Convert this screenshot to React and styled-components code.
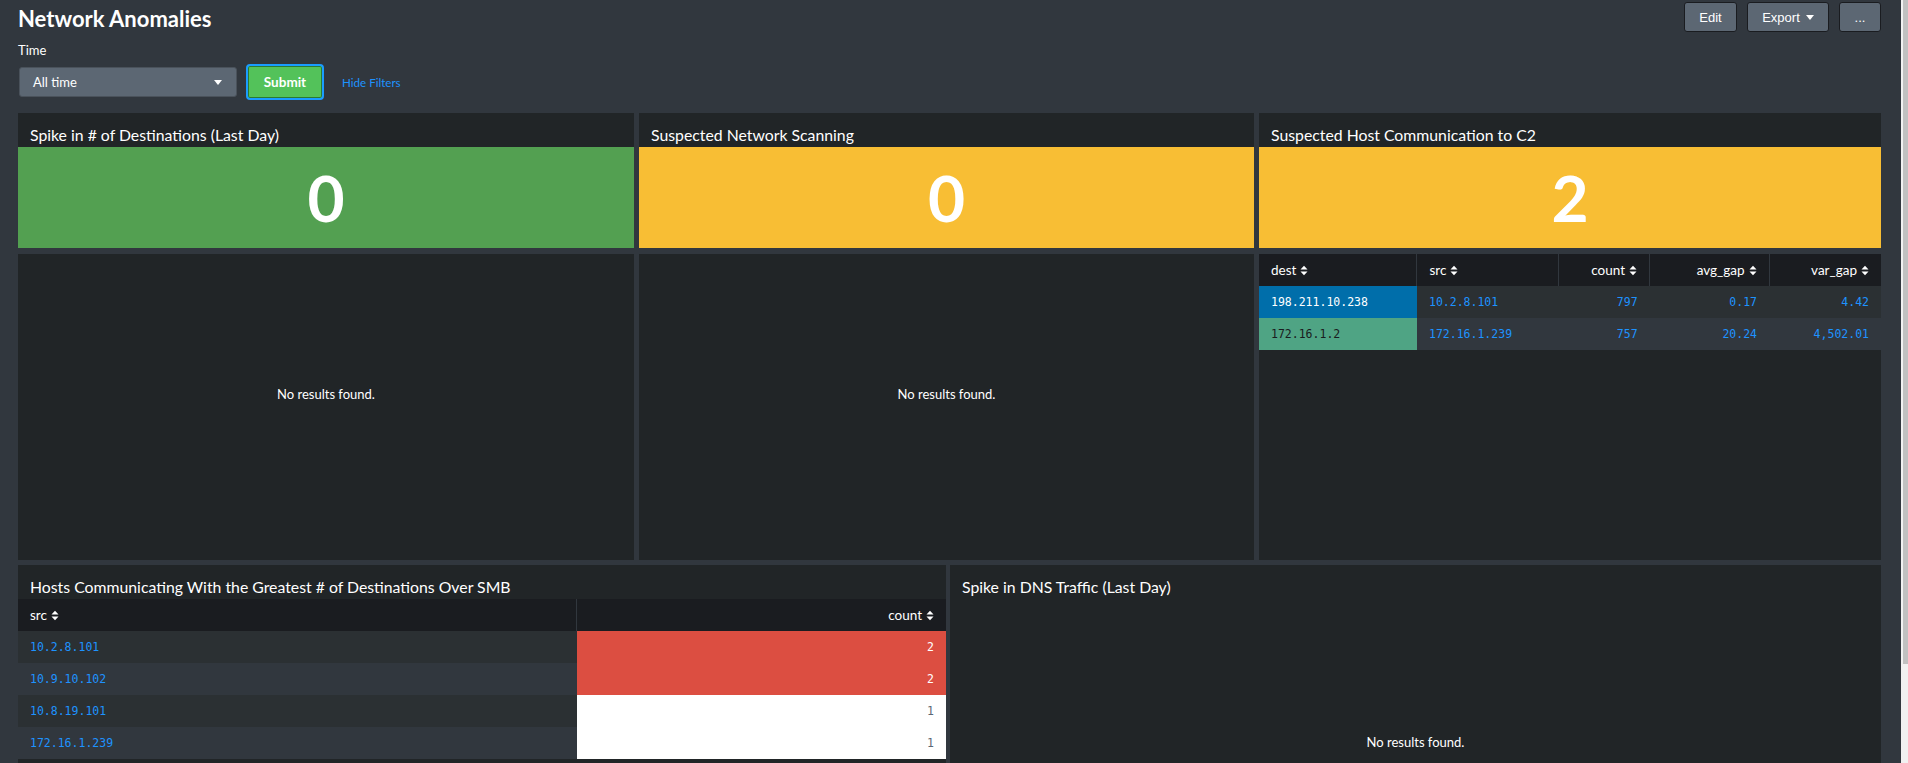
import React from "react";
import styled, { createGlobalStyle } from "styled-components";

const GlobalStyle = createGlobalStyle`
  html, body {
    margin: 0;
    padding: 0;
    background: #31373e;
    overflow: hidden;
  }
  body {
    font-family: Lato, "Open Sans", sans-serif;
    color: #fff;
  }
  * { box-sizing: border-box; }
`;

const Shell = styled.div`
  display: flex;
  height: 763px;
  overflow: hidden;
`;

const Main = styled.div`
  flex: 1;
  min-width: 0;
  padding: 0 20px 0 18px;
  overflow: hidden;
`;

const ScrollTrack = styled.div`
  width: 7px;
  flex: none;
  background: #f1f1f1;
  display: flex;
  justify-content: flex-end;
`;

const ScrollThumb = styled.div`
  width: 5px;
  height: 664px;
  background: #c1c1c1;
`;

const Header = styled.div`
  display: flex;
  justify-content: space-between;
  align-items: flex-start;
`;

const PageTitle = styled.h1`
  margin: 6px 0 0 0;
  font-size: 22px;
  line-height: 1.2;
  font-weight: 700;
  color: #fff;
`;

const Actions = styled.div`
  display: flex;
  gap: 10px;
  margin-top: 2px;
`;

const ActionButton = styled.button`
  height: 30px;
  width: ${(p) => p.$w}px;
  background: #5c6773;
  border: 1px solid #1a1c20;
  border-radius: 3px;
  color: #fff;
  font-family: "Liberation Sans", Arial, sans-serif;
  font-size: 13px;
  display: flex;
  align-items: center;
  justify-content: center;
  gap: 6px;
  padding: 0;
`;

const Caret = styled.span`
  width: 0;
  height: 0;
  border-left: 4px solid transparent;
  border-right: 4px solid transparent;
  border-top: 5px solid #fff;
`;

const FieldLabel = styled.div`
  margin-top: 11px;
  font-size: 13px;
  line-height: 15px;
  color: #fff;
`;

const Filters = styled.div`
  display: flex;
  align-items: center;
  height: 36px;
  margin-top: 6px;
  margin-left: 1px;
`;

const Dropdown = styled.div`
  width: 218px;
  height: 30px;
  background: #5c6773;
  border: 1px solid #4a525b;
  border-radius: 3px;
  display: flex;
  align-items: center;
  justify-content: space-between;
  padding: 0 14px 0 13px;
  font-size: 13px;
  color: #fff;
`;

const SubmitButton = styled.button`
  margin-left: 9px;
  width: 78px;
  height: 36px;
  background: #53c25a;
  border: 2px solid #1a9cff;
  border-radius: 4px;
  box-shadow: inset 0 0 0 1px #2b7a32;
  color: #fff;
  font-family: Lato, sans-serif;
  font-weight: 700;
  font-size: 13.5px;
  padding: 0;
`;

const HideLink = styled.a`
  margin-left: 18px;
  font-size: 11.6px;
  color: #1e93ff;
  text-decoration: none;
`;

const Dashboard = styled.div`
  margin-top: 13px;
  display: flex;
  flex-direction: column;
  gap: 5px;
`;

const Row = styled.div`
  display: grid;
  grid-template-columns: ${(p) => p.$cols};
  gap: ${(p) => p.$gap}px;
`;

const Column = styled.div`
  display: flex;
  flex-direction: column;
  gap: 6px;
  min-width: 0;
`;

const Panel = styled.section`
  background: #212527;
  height: ${(p) => p.$h}px;
  min-width: 0;
  display: flex;
  flex-direction: column;
  overflow: hidden;
`;

const PanelTitle = styled.h2`
  margin: 0;
  height: 34px;
  flex: none;
  display: flex;
  align-items: center;
  padding: 8px 12px 0;
  font-size: 15.8px;
  font-weight: 400;
  color: #fff;
  white-space: nowrap;
`;

const SingleValue = styled.div`
  height: 101px;
  background: ${(p) => p.$bg};
  display: flex;
  align-items: center;
  justify-content: center;
  font-size: 64px;
  font-weight: 700;
  color: #fff;
  line-height: 1;
`;

const Message = styled.div`
  height: 250px;
  margin-top: ${(p) => p.$top}px;
  display: flex;
  align-items: center;
  justify-content: center;
  font-size: 13px;
  color: #fff;
`;

const Table = styled.table`
  width: 100%;
  border-collapse: collapse;
  table-layout: fixed;
`;

const Th = styled.th`
  height: 32px;
  background: #1a1c20;
  font-weight: 400;
  font-size: 13.5px;
  color: #fff;
  padding: 0 12px;
  text-align: ${(p) => (p.$right ? "right" : "left")};
  border-left: ${(p) => (p.$first ? "none" : "1px solid #31373e")};
  white-space: nowrap;
`;

const Tr = styled.tr`
  background: ${(p) => (p.$even ? "#31373e" : "#2b3033")};
`;

const Td = styled.td`
  height: 32px;
  padding: 0 12px;
  font-family: "DejaVu Sans Mono", "Liberation Mono", monospace;
  font-size: 11.5px;
  color: ${(p) => p.$color || "#1e93ff"};
  background: ${(p) => p.$bg || "transparent"};
  text-align: ${(p) => (p.$right ? "right" : "left")};
  white-space: nowrap;
`;

const SortWrap = styled.span`
  display: inline-flex;
  align-items: center;
  gap: 4px;
`;

const SortIcon = () => (
  <svg width="8" height="11" viewBox="0 0 8 11">
    <path d="M0.5 4.5 L4 0.8 L7.5 4.5 Z M0.5 6.5 L7.5 6.5 L4 10.2 Z" fill="#fff" />
  </svg>
);

const Sortable = ({ children }) => (
  <SortWrap>
    {children}
    <SortIcon />
  </SortWrap>
);

const c2Rows = [
  { dest: "198.211.10.238", destBg: "#006eaa", destColor: "#fff", src: "10.2.8.101", count: "797", avg: "0.17", vgap: "4.42" },
  { dest: "172.16.1.2", destBg: "#4fa484", destColor: "#1a1c20", src: "172.16.1.239", count: "757", avg: "20.24", vgap: "4,502.01" },
];

const smbRows = [
  { src: "10.2.8.101", count: "2", bg: "#dc4e41", color: "#fff" },
  { src: "10.9.10.102", count: "2", bg: "#dc4e41", color: "#fff" },
  { src: "10.8.19.101", count: "1", bg: "#ffffff", color: "#5c6773" },
  { src: "172.16.1.239", count: "1", bg: "#ffffff", color: "#5c6773" },
];

export default function App() {
  return (
    <>
      <GlobalStyle />
      <Shell>
        <Main>
          <Header>
            <PageTitle>Network Anomalies</PageTitle>
            <Actions>
              <ActionButton $w={53}>Edit</ActionButton>
              <ActionButton $w={82}>
                Export <Caret />
              </ActionButton>
              <ActionButton $w={42}>...</ActionButton>
            </Actions>
          </Header>
          <FieldLabel>Time</FieldLabel>
          <Filters>
            <Dropdown>
              <span>All time</span>
              <Caret />
            </Dropdown>
            <SubmitButton>Submit</SubmitButton>
            <HideLink>Hide Filters</HideLink>
          </Filters>

          <Dashboard>
            <Row $cols="616fr 615fr 622fr" $gap={5}>
              <Column>
                <Panel>
                  <PanelTitle>Spike in # of Destinations (Last Day)</PanelTitle>
                  <SingleValue $bg="#53a051">0</SingleValue>
                </Panel>
                <Panel $h={306}>
                  <Message $top={15}>No results found.</Message>
                </Panel>
              </Column>
              <Column>
                <Panel>
                  <PanelTitle>Suspected Network Scanning</PanelTitle>
                  <SingleValue $bg="#f8be34">0</SingleValue>
                </Panel>
                <Panel $h={306}>
                  <Message $top={15}>No results found.</Message>
                </Panel>
              </Column>
              <Column>
                <Panel>
                  <PanelTitle>Suspected Host Communication to C2</PanelTitle>
                  <SingleValue $bg="#f8be34">2</SingleValue>
                </Panel>
                <Panel $h={306}>
                  <Table>
                    <colgroup>
                      <col style={{ width: "25.4%" }} />
                      <col style={{ width: "22.7%" }} />
                      <col style={{ width: "14.7%" }} />
                      <col style={{ width: "19.2%" }} />
                      <col style={{ width: "18%" }} />
                    </colgroup>
                    <thead>
                      <tr>
                        <Th $first><Sortable>dest</Sortable></Th>
                        <Th><Sortable>src</Sortable></Th>
                        <Th $right><Sortable>count</Sortable></Th>
                        <Th $right><Sortable>avg_gap</Sortable></Th>
                        <Th $right><Sortable>var_gap</Sortable></Th>
                      </tr>
                    </thead>
                    <tbody>
                      {c2Rows.map((r, i) => (
                        <Tr key={r.dest} $even={i % 2 === 1}>
                          <Td $bg={r.destBg} $color={r.destColor}>{r.dest}</Td>
                          <Td>{r.src}</Td>
                          <Td $right>{r.count}</Td>
                          <Td $right>{r.avg}</Td>
                          <Td $right>{r.vgap}</Td>
                        </Tr>
                      ))}
                    </tbody>
                  </Table>
                </Panel>
              </Column>
            </Row>

            <Row $cols="928fr 931fr" $gap={4}>
              <Panel $h={330}>
                <PanelTitle>Hosts Communicating With the Greatest # of Destinations Over SMB</PanelTitle>
                <Table>
                  <colgroup>
                    <col style={{ width: "60.2%" }} />
                    <col style={{ width: "39.8%" }} />
                  </colgroup>
                  <thead>
                    <tr>
                      <Th $first><Sortable>src</Sortable></Th>
                      <Th $right><Sortable>count</Sortable></Th>
                    </tr>
                  </thead>
                  <tbody>
                    {smbRows.map((r, i) => (
                      <Tr key={r.src} $even={i % 2 === 1}>
                        <Td>{r.src}</Td>
                        <Td $right $bg={r.bg} $color={r.color}>{r.count}</Td>
                      </Tr>
                    ))}
                  </tbody>
                </Table>
              </Panel>
              <Panel $h={330}>
                <PanelTitle>Spike in DNS Traffic (Last Day)</PanelTitle>
                <Message $top={18}>No results found.</Message>
              </Panel>
            </Row>
          </Dashboard>
        </Main>
        <ScrollTrack>
          <ScrollThumb />
        </ScrollTrack>
      </Shell>
    </>
  );
}
